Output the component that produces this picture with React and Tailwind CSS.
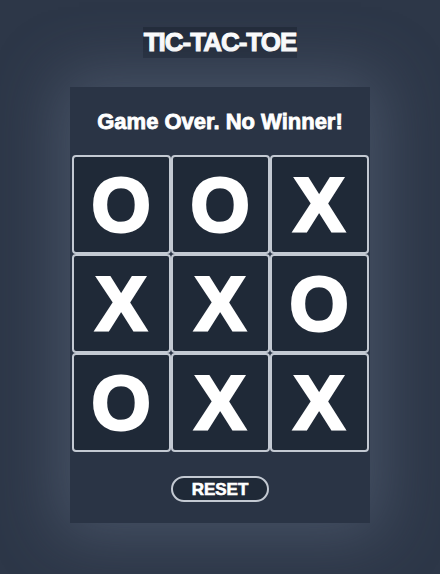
import React, { useState } from "react";

// final board from the screenshot
const initialBoard = ["O", "O", "X", "X", "X", "O", "O", "X", "X"];

const Cell = ({ value }) => (
  <button className="w-[99px] h-[99px] bg-[#1f2937] border-2 border-[#c3c9d2] rounded-[4px] flex items-center justify-center text-white font-bold text-[76px] leading-none [-webkit-text-stroke:3px_white]">
    {value}
  </button>
);

const App = () => {
  const [board, setBoard] = useState(initialBoard);

  const reset = () => setBoard(Array(9).fill(""));

  return (
    <div
      className="min-h-screen w-full bg-[#2d3748] flex flex-col items-center"
      style={{ fontFamily: '"Liberation Sans", Arial, sans-serif' }}
    >
      <h1 className="mt-[27px] text-[26px] leading-[31px] font-bold tracking-[-1px] text-white bg-[#222b3a] px-[1px] [-webkit-text-stroke:1px_white]">
        TIC-TAC-TOE
      </h1>

      <div className="mt-[29px] w-[300px] bg-[#2a3445] flex flex-col items-center pt-[22px] pb-[21px] shadow-[0_0_60px_12px_rgba(120,134,158,0.35)]">
        <h2 className="text-[22px] leading-[25px] font-bold text-white [-webkit-text-stroke:0.8px_white]">
          Game Over. No Winner!
        </h2>

        <div className="mt-[21px] grid grid-cols-3">
          {board.map((v, i) => (
            <Cell key={i} value={v} />
          ))}
        </div>

        <button
          onClick={reset}
          className="mt-[24px] w-[98px] h-[26px] rounded-full border-2 border-[#c3c9d2] bg-[#1f2937] text-white font-bold text-[17px] leading-none flex items-center justify-center [-webkit-text-stroke:0.6px_white]"
        >
          RESET
        </button>
      </div>
    </div>
  );
};

export default App;
